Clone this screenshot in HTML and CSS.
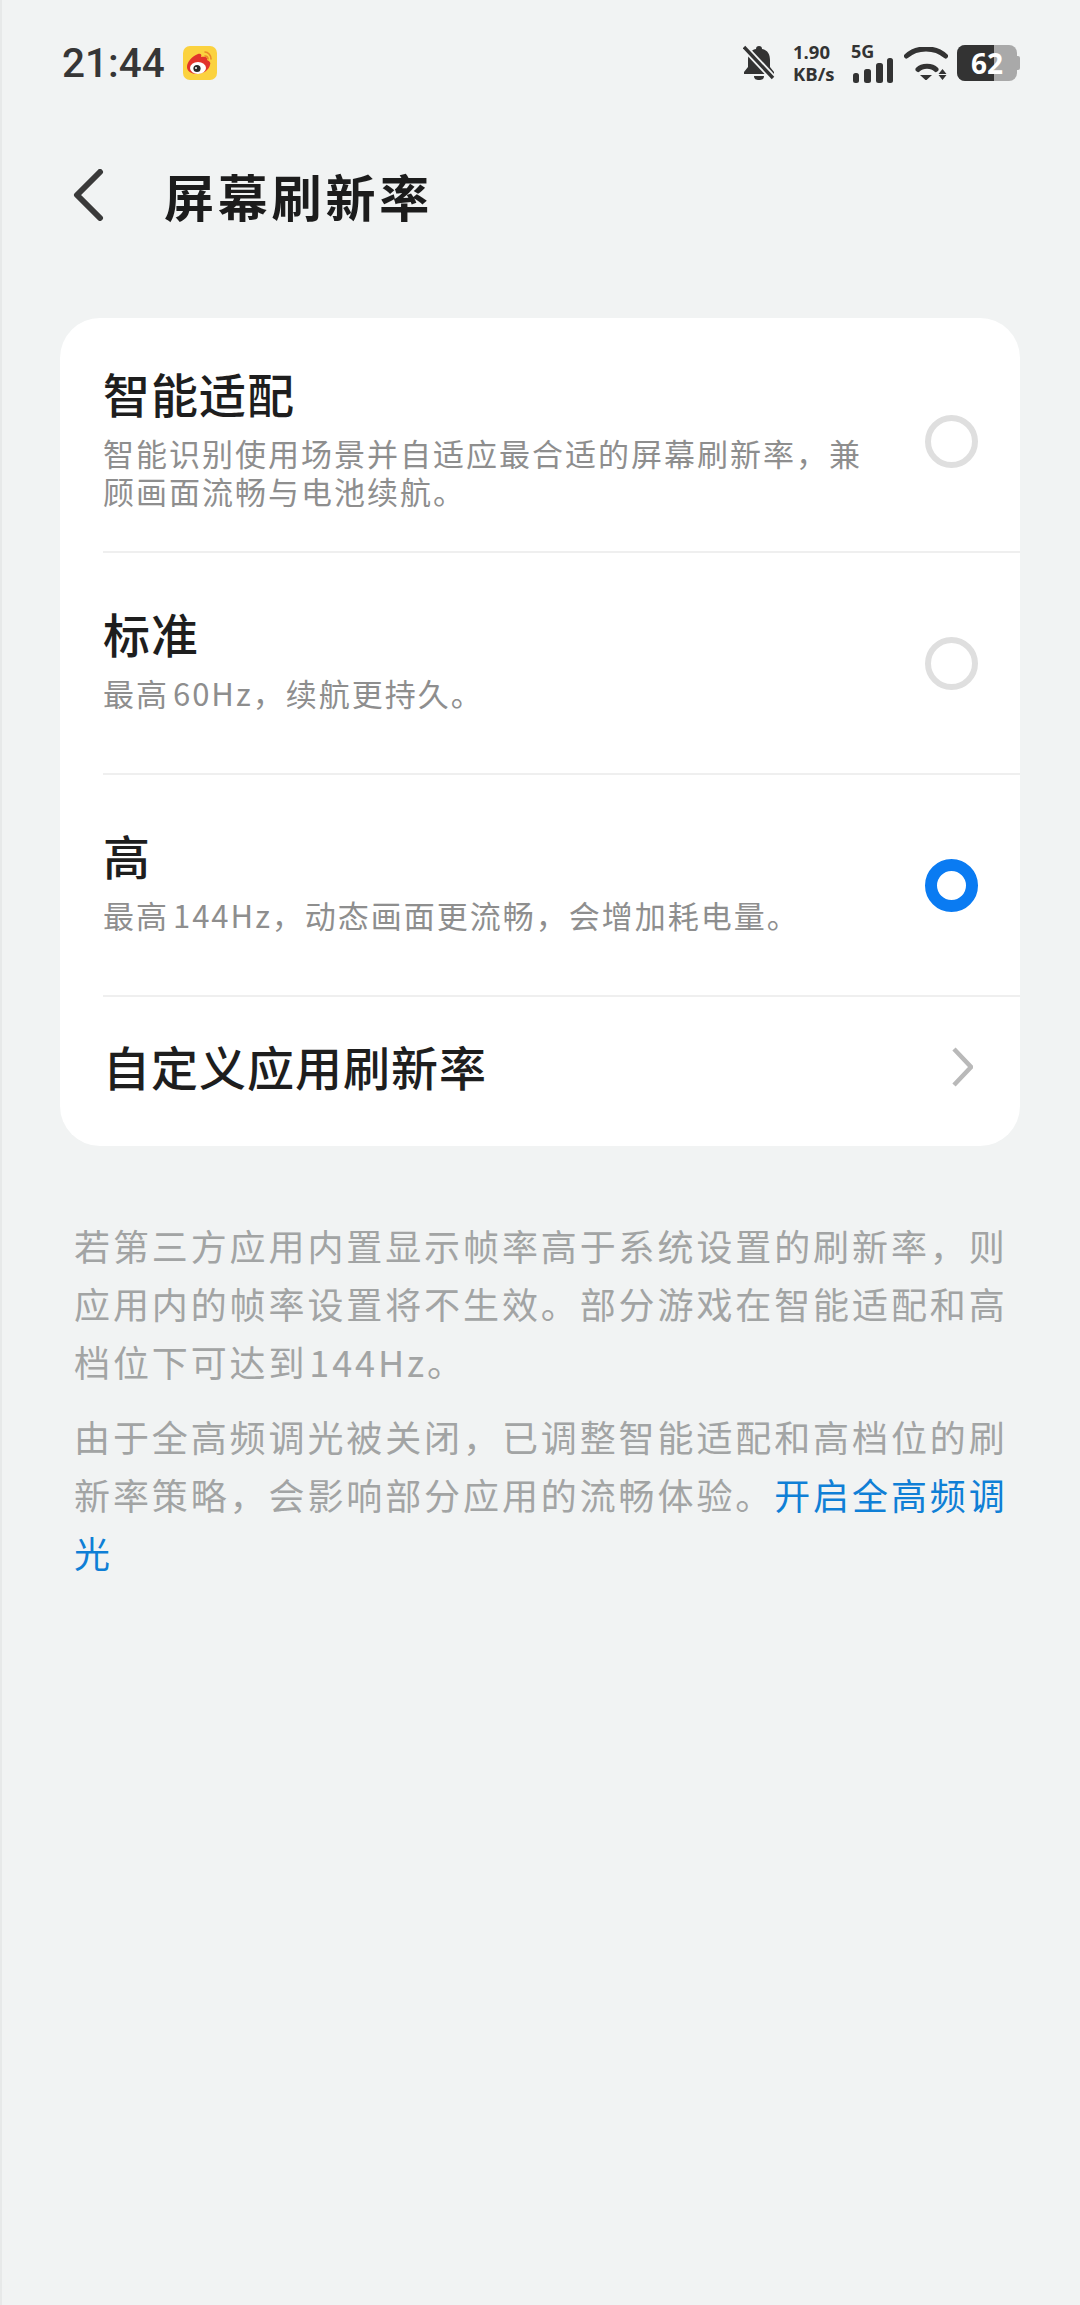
FILE: index.html
```html
<!DOCTYPE html>
<html lang="zh-CN">
<head>
<meta charset="utf-8">
<title>屏幕刷新率</title>
<link rel="stylesheet" href="styles.css">
</head>
<body>
<div class="page">
  <header class="status">
    <div class="status-left">
      <span class="time">21:44</span>
      <svg class="weibo" viewBox="0 0 34 34" width="34" height="34">
        <rect width="34" height="34" rx="7" fill="#fbd23f"/>
        <path d="M4 21c0-5 5-11 11-13 3-1 4 1 3 3 4-1 7 0 6 3 3 1 4 3 3 5-1 5-7 9-13 9-6 0-10-3-10-7z" fill="#e2332b"/>
        <ellipse cx="15" cy="22" rx="8" ry="6" fill="#fff"/>
        <circle cx="14" cy="22.500" r="3.600" fill="#2a2a2a"/>
        <circle cx="13" cy="22" r="1" fill="#fff"/>
        <path d="M22 6c3 0 6 3 6 7M22 10c2 0 3 1 3 3" fill="none" stroke="#e98a2a" stroke-width="1.600" stroke-linecap="round"/>
      </svg>
    </div>
    <div class="status-right">
      <svg class="bell" viewBox="0 0 32 36" width="32" height="36">
        <path d="M16 1c2 0 3 1 3 3 6 1 8 6 8 11v7l4 5v2H1v-2l4-5v-7c0-5 2-10 8-11 0-2 1-3 3-3z" fill="#333"/>
        <path d="M11 31h10c0 3-2 4-5 4s-5-1-5-4z" fill="#333"/>
        <path d="M1 2l29 31" stroke="#f1f3f3" stroke-width="7"/>
        <path d="M1 2l29 31" stroke="#333" stroke-width="3.400"/>
      </svg>
      <div class="speed"><span>1.90</span><span>KB/s</span></div>
      <div class="signal">
        <span class="gen">5G</span>
        <svg viewBox="0 0 40 25" width="40" height="25" class="bars">
          <rect x="0" y="15" width="6" height="10" rx="2.500" fill="#333"/>
          <rect x="11" y="11" width="7" height="14" rx="2.500" fill="#333"/>
          <rect x="23" y="5" width="7" height="20" rx="2.500" fill="#333"/>
          <rect x="34" y="0" width="6" height="25" rx="2.500" fill="#333"/>
        </svg>
      </div>
      <svg class="wifi" viewBox="0 0 44 33" width="44" height="33">
        <path d="M2.500 9C13-.5 31-.5 41.500 9M14 22.500C18 18 28 18 32 22.500" fill="none" stroke="#333" stroke-width="5" stroke-linecap="round"/>
        <path d="M16 28h12l-6 5.500zM34.500 27l4-5 4 5zM34.500 28h8l-4 5z" fill="#333"/>
      </svg>
      <div class="battery"><div class="batt-body"><div class="batt-fill"></div><span class="batt-num">62</span></div><div class="batt-cap"></div></div>
    </div>
  </header>

  <nav class="nav">
    <svg class="back" viewBox="0 0 34 52" width="34" height="52"><path d="M29 3L6 26l23 23" fill="none" stroke="#3a3a3a" stroke-width="6" stroke-linecap="round" stroke-linejoin="round"/></svg>
    <h1 class="nav-title">屏幕刷新率</h1>
  </nav>

  <section class="card">
    <div class="row row-first">
      <div class="row-text">
        <div class="row-title">智能适配</div>
        <div class="row-desc">智能识别使用场景并自适应最合适的屏幕刷新率，兼顾画面流畅与电池续航。</div>
      </div>
      <span class="radio"></span>
    </div>
    <div class="row">
      <div class="row-text">
        <div class="row-title">标准</div>
        <div class="row-desc">最高 60Hz，续航更持久。</div>
      </div>
      <span class="radio"></span>
    </div>
    <div class="row">
      <div class="row-text">
        <div class="row-title">高</div>
        <div class="row-desc">最高 144Hz，动态画面更流畅，会增加耗电量。</div>
      </div>
      <span class="radio radio-on"></span>
    </div>
    <div class="row row-link">
      <div class="row-title">自定义应用刷新率</div>
      <svg class="chev" viewBox="0 0 22 40" width="22" height="40"><path d="M3 2l17 18L3 38" fill="none" stroke="#b9b9b9" stroke-width="4.500"/></svg>
    </div>
  </section>

  <section class="notes">
    <p>若第三方应用内置显示帧率高于系统设置的刷新率，则应用内的帧率设置将不生效。部分游戏在智能适配和高档位下可达到 144Hz。</p>
    <p>由于全高频调光被关闭，已调整智能适配和高档位的刷新率策略，会影响部分应用的流畅体验。<a class="link">开启全高频调光</a></p>
  </section>
</div>
</body>
</html>
```

FILE: styles.css
```css
* { box-sizing: border-box; }
html, body { margin: 0; padding: 0; }
body {
  width: 1080px;
  height: 2305px;
  background: #f1f3f3;
  font-family: "Noto Sans CJK SC", "Noto Sans", sans-serif;
  overflow: hidden;
}
.page { display: flex; flex-direction: column; height: 2305px; padding: 0 60px 0 58px; border-left: 2px solid #e7e9e9; }

.status { display: flex; justify-content: space-between; align-items: center; height: 44px; margin-top: 41px; padding-left: 2px; }
.status-left { display: flex; align-items: center; gap: 18px; }
.time { font-family: "Roboto", sans-serif; font-size: 40.500px; font-weight: 500; color: #363636; line-height: 44px; }
.weibo { display: block; }
.status-right { display: flex; align-items: center; }
.bell { display: block; margin-right: 18px; }
.speed { display: flex; flex-direction: column; font-family: "Open Sans", sans-serif; font-weight: 700; font-size: 18.500px; line-height: 22px; color: #333; align-items: flex-start; margin-right: 18px; width: 40px; white-space: nowrap; }
.signal { position: relative; width: 42px; height: 40px; margin-right: 11px; }
.gen { position: absolute; top: -2px; left: 0; font-family: "Open Sans", sans-serif; font-weight: 700; font-size: 18px; line-height: 20px; color: #333; }
.bars { position: absolute; left: 2px; top: 15px; }
.wifi { display: block; margin-right: 9px; }
.battery { display: flex; align-items: center; }
.batt-body { position: relative; width: 60px; height: 36px; border-radius: 8px; background: #a9a9a9; overflow: hidden; display: flex; align-items: center; justify-content: center; }
.batt-fill { position: absolute; left: 0; top: 0; bottom: 0; width: 37px; background: #333; }
.batt-num { position: relative; font-family: "Open Sans", sans-serif; font-weight: 700; font-size: 28px; color: #fff; line-height: 34px; }
.batt-cap { width: 3px; height: 14px; background: #a9a9a9; border-radius: 0 2px 2px 0; }

.nav { display: flex; align-items: center; height: 60px; margin-top: 80px; padding-left: 11px; }
.back { display: block; }
.nav-title { margin: 0 0 0 59px; font-size: 50px; font-weight: 700; color: #1c1c1c; line-height: 60px; letter-spacing: 3.800px; }

.card { margin-top: 93px; background: #fff; border-radius: 40px; padding: 0 0 0 43px; display: flex; flex-direction: column; }
.row { display: flex; align-items: center; justify-content: space-between; height: 222px; padding-right: 42px; border-top: 2px solid #efefef; }
.row-first { height: 233px; border-top: 0; }
.row-text { width: 770px; margin-top: -12px; }
.row-first .row-text { margin-top: 2px; }
.row-title { font-size: 47px; font-weight: 500; color: #1e1e1e; line-height: 62px; letter-spacing: 1px; }
.row-desc { font-size: 31px; font-weight: 400; color: #8e8e8e; line-height: 38px; letter-spacing: 2px; margin-top: 10px; word-spacing: -5px; }
.radio { display: block; flex: none; width: 53px; height: 53px; border-radius: 50%; border: 6px solid #dfdfdf; }
.row-first .radio { margin-top: 13px; }
.radio-on { border: 12px solid #0a7bf2; }
.row-link { height: 151px; padding-bottom: 10px; padding-right: 47px; }
.row-link .row-title { margin-top: -2px; }
.chev { display: block; }

.notes { margin-top: 70px; padding: 0 8px 0 14px; font-size: 36px; color: #a2a4a4; line-height: 58px; letter-spacing: 2.900px; word-spacing: -9px; }
.notes p { margin: 0 0 17px; }
.link { color: #0f7fd6; }
```
